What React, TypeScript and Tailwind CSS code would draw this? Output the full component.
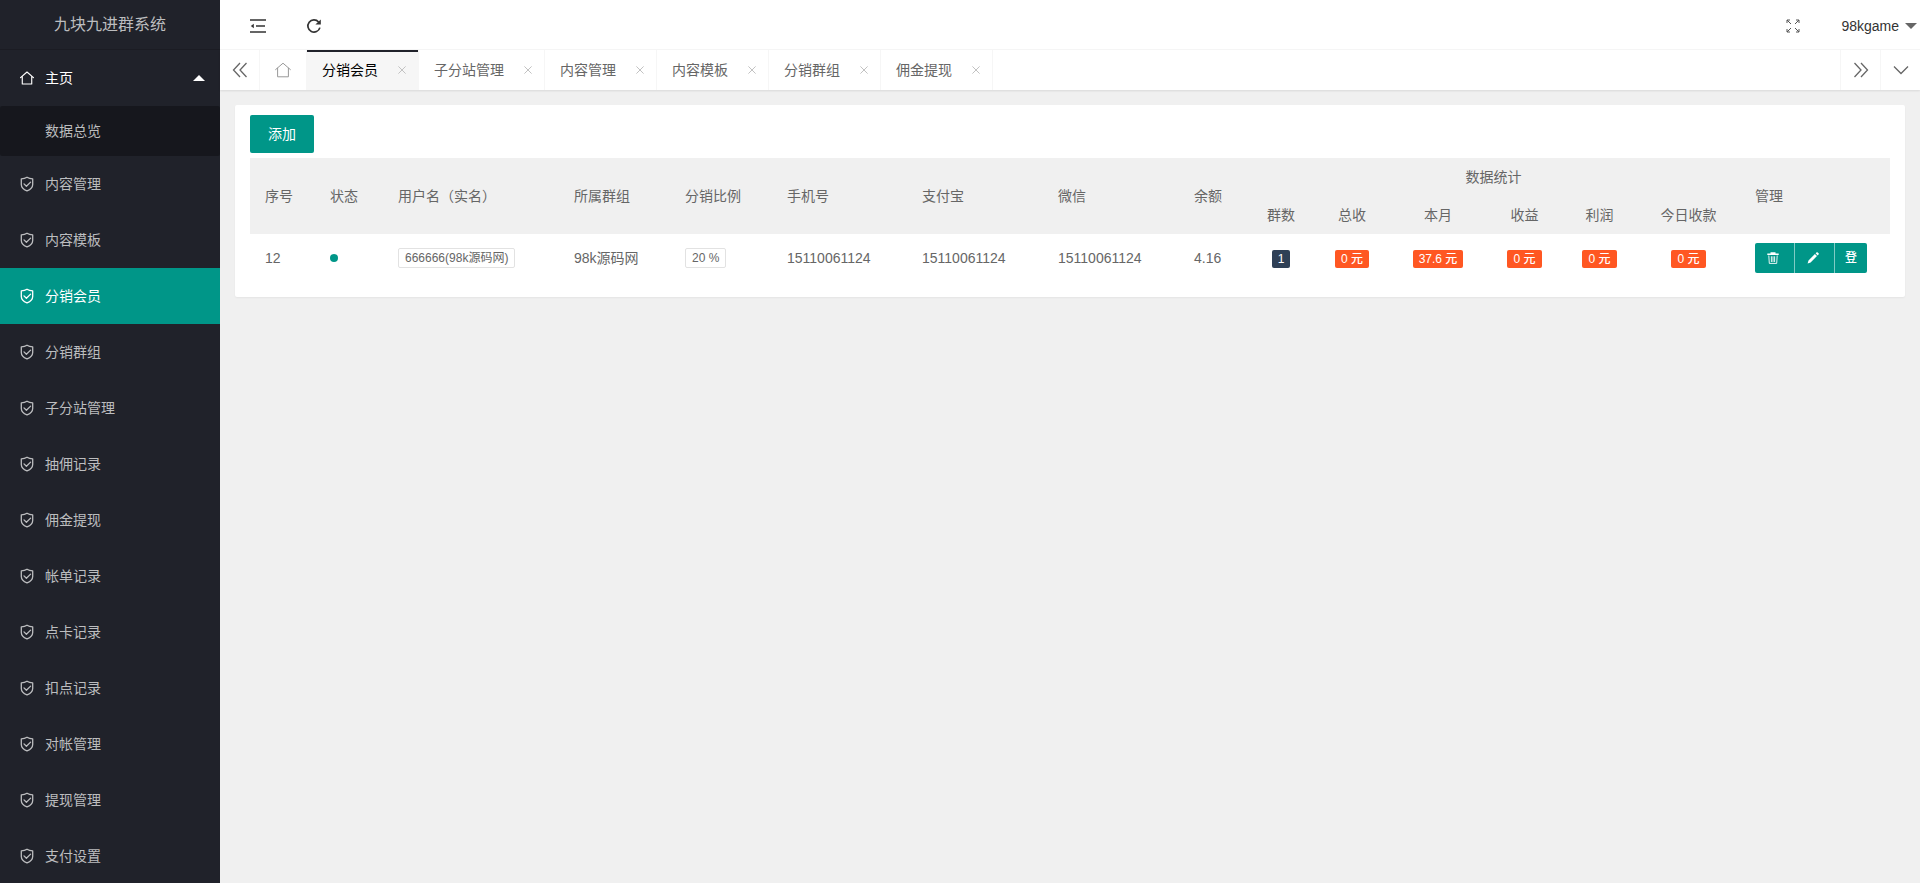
import type { ReactNode } from "react";

const MENU = [
  "内容管理", "内容模板", "分销会员", "分销群组", "子分站管理", "抽佣记录", "佣金提现",
  "帐单记录", "点卡记录", "扣点记录", "对帐管理", "提现管理", "支付设置",
];
const ACTIVE = "分销会员";

const TABS = ["分销会员", "子分站管理", "内容管理", "内容模板", "分销群组", "佣金提现"];

const COLS = [65, 68, 176, 111, 102, 135, 136, 136, 68, 68, 74, 98, 75, 75, 103, 150];
const TOTAL = COLS.reduce((a, b) => a + b, 0);

const HEADS = ["序号", "状态", "用户名（实名）", "所属群组", "分销比例", "手机号", "支付宝", "微信", "余额"];
const STATS = ["群数", "总收", "本月", "收益", "利润", "今日收款"];

const ROWS = [
  {
    id: 12,
    user: "666666(98k源码网)",
    group: "98k源码网",
    rate: "20 %",
    phone: "15110061124",
    alipay: "15110061124",
    wechat: "15110061124",
    balance: "4.16",
    groups: 1,
    money: ["0 元", "37.6 元", "0 元", "0 元", "0 元"],
  },
];

function HomeIcon({ className }: { className: string }) {
  return (
    <svg viewBox="0 0 16 16" className={className} fill="none" stroke="currentColor" strokeLinejoin="round" strokeLinecap="round">
      <path d="M0.6 7.6 8 1.2l7.4 6.4M2.6 6.2v8.6h10.8V6.2" />
    </svg>
  );
}

function ShieldIcon() {
  return (
    <svg viewBox="0 0 14 16" className="h-4 w-3.5 shrink-0" fill="none" stroke="currentColor" strokeWidth="1.3" strokeLinejoin="round" strokeLinecap="round">
      <path d="M7 1.2c1.6 1 3.6 1.5 5.700 1.600v5.600c0 3-2.300 5-5.700 6.500-3.400-1.500-5.700-3.500-5.700-6.500V2.800C3.400 2.700 5.400 2.200 7 1.200z" />
      <path d="M4 7.900l2.400 2.400 4.200-4.200" />
    </svg>
  );
}

function Sidebar() {
  return (
    <aside className="w-[220px] shrink-0 overflow-hidden bg-[#20222a] text-[#bcbdbf]">
      <div className="flex h-[50px] items-center justify-center border-b border-black/15 text-base">九块九进群系统</div>
      <nav>
        <a href="#" className="flex h-14 items-center px-5 text-white">
          <HomeIcon className="h-3.5 w-3.5 stroke-[1.3]" />
          <span className="ml-[11px] flex-1">主页</span>
          <svg viewBox="0 0 12 6" className="mr-[-5px] h-1.5 w-3" fill="currentColor">
            <path d="M6 0l6 6H0z" />
          </svg>
        </a>
        <a href="#" className="flex h-[50px] items-center rounded-xs bg-black/30 pl-[45px]">数据总览</a>
        {MENU.map((item) => (
          <a
            key={item}
            href="#"
            className={`flex h-14 items-center gap-[11px] px-5 ${item === ACTIVE ? "bg-[#009688] text-white" : ""}`}
          >
            <ShieldIcon />
            {item}
          </a>
        ))}
      </nav>
    </aside>
  );
}

function Header() {
  return (
    <header className="flex h-[50px] items-center border-b border-[#f6f6f6] bg-white pt-0.5 text-[#333]">
      <button type="button" aria-label="侧边伸缩" className="ml-[29px]">
        <svg viewBox="0 0 18 16" className="h-4 w-[18px]" fill="none" stroke="currentColor" strokeWidth="1.500">
          <path d="M1 2h16M7 8h9M1 14h16" />
          <path d="M1.800 8l3-2.200v4.400z" fill="currentColor" stroke="none" />
        </svg>
      </button>
      <button type="button" aria-label="刷新" className="ml-[39px]">
        <svg viewBox="0 0 16 16" className="h-4 w-4" fill="none" stroke="currentColor" strokeWidth="1.700">
          <path d="M12.600 4A6.100 6.100 0 1 0 13.900 9.600" />
          <path d="M14.800 1.400v5.200H9.400z" fill="currentColor" stroke="none" />
        </svg>
      </button>
      <button type="button" aria-label="全屏" className="ml-auto">
        <svg viewBox="0 0 14 14" className="h-3.5 w-3.5" fill="none" stroke="#555" strokeWidth="1">
          <path d="M1 4V1h3M1 1l4 4M10 1h3v3M13 1L9 5M1 10v3h3M1 13l4-4M13 10v3h-3M13 13L9 9" />
        </svg>
      </button>
      <button type="button" className="mr-[3px] ml-[41px] flex items-center gap-1.5">
        98kgame
        <svg viewBox="0 0 12 6" className="h-1.5 w-3" fill="#666">
          <path d="M0 0h12L6 6z" />
        </svg>
      </button>
    </header>
  );
}

function TabBar() {
  return (
    <div className="relative flex h-10 bg-white text-[#666] shadow-[0_1px_2px_rgba(0,0,0,0.1)]">
      <button type="button" aria-label="左移" className="flex w-10 items-center justify-center border-r border-[#f6f6f6]">
        <svg viewBox="0 0 16 16" className="h-4 w-4" fill="none" stroke="currentColor" strokeWidth="1.300">
          <path d="M8 1L1.500 8 8 15M14.500 1L8 8l6.500 7" />
        </svg>
      </button>
      <a href="#" aria-label="主页" className="flex w-[47px] items-center justify-center border-r border-[#f6f6f6] text-[#999]">
        <HomeIcon className="h-4 w-4" />
      </a>
      {TABS.map((tab) => (
        <div
          key={tab}
          className={`relative flex items-center border-r border-[#f6f6f6] pl-[15px] ${tab === ACTIVE ? "bg-[#f6f6f6] text-black" : ""}`}
        >
          {tab === ACTIVE && <span className="absolute inset-x-0 top-0 h-0.5 bg-[#20222a]" />}
          <a href="#">{tab}</a>
          <button type="button" aria-label={`关闭 ${tab}`} className="mr-2 ml-4 flex h-4 w-4 items-center justify-center text-[#c2c2c2]">
            <svg viewBox="0 0 8 8" className="h-2 w-2" fill="none" stroke="currentColor">
              <path d="M0.400 0.400l7.200 7.200M7.600 0.400L0.400 7.600" />
            </svg>
          </button>
        </div>
      ))}
      <button type="button" aria-label="右移" className="ml-auto flex w-10 items-center justify-center border-l border-[#f6f6f6]">
        <svg viewBox="0 0 16 16" className="h-4 w-4" fill="none" stroke="currentColor" strokeWidth="1.300">
          <path d="M1.500 1L8 8l-6.500 7M8 1l6.500 7L8 15" />
        </svg>
      </button>
      <button type="button" aria-label="更多" className="flex w-10 items-center justify-center border-l border-[#f6f6f6]">
        <svg viewBox="0 0 16 10" className="h-2.5 w-4" fill="none" stroke="currentColor" strokeWidth="1.300">
          <path d="M1 1.500l7 7 7-7" />
        </svg>
      </button>
    </div>
  );
}

function Badge({ children, dark }: { children: ReactNode; dark?: boolean }) {
  return (
    <span className={`inline-block h-[18px] rounded-xs px-1.5 align-middle text-xs leading-[18px] font-medium text-white ${dark ? "bg-[#2f4056]" : "bg-[#ff5722]"}`}>
      {children}
    </span>
  );
}

function RimBadge({ children }: { children: ReactNode }) {
  return (
    <span className="block h-5 w-fit rounded-xs border border-[#e2e2e2] px-1.5 text-xs leading-[18px]">{children}</span>
  );
}

function Actions() {
  return (
    <div className="flex h-[30px] text-xs text-white">
      <button type="button" aria-label="删除" className="flex w-[39px] items-center justify-center rounded-l-xs bg-[#009688] pr-[3px]">
        <svg viewBox="0 0 12 12" className="h-3 w-3" fill="none" stroke="currentColor">
          <path d="M0.300 2.200h11.400M3.500 1h5" strokeWidth="1.500" />
          <path d="M1.800 3.500l0.500 7.900h7.400l0.500-7.900M4.400 4.300v5.700M6 4.300v5.700M7.600 4.300v5.700" strokeWidth="0.900" />
        </svg>
      </button>
      <button type="button" aria-label="编辑" className="flex w-10 items-center justify-center border-l border-white/50 bg-[#009688] pr-[3px]">
        <svg viewBox="0 0 12 12" className="h-3 w-3" fill="currentColor">
          <path d="M0.600 11.400l0.900-3L7.900 2l2.100 2.100-6.400 6.400zM8.600 1.300l0.800-0.800a1 1 0 0 1 1.400 0l0.700 0.700a1 1 0 0 1 0 1.400l-0.800 0.800z" />
        </svg>
      </button>
      <button type="button" className="w-[33px] rounded-r-xs border-l border-white/50 bg-[#009688] font-medium">登</button>
    </div>
  );
}

function MemberTable() {
  return (
    <table className="mt-[5px] w-full table-fixed border-collapse text-left leading-5">
      <colgroup>
        {COLS.map((w, i) => (
          <col key={i} style={{ width: `${(w / TOTAL) * 100}%` }} />
        ))}
      </colgroup>
      <thead className="bg-[#f0f0f0]">
        <tr>
          {HEADS.map((h) => (
            <th key={h} rowSpan={2} className="px-[15px] py-[9px] font-normal whitespace-nowrap">{h}</th>
          ))}
          <th colSpan={6} className="px-[15px] py-[9px] text-center font-normal">数据统计</th>
          <th rowSpan={2} className="px-[15px] py-[9px] font-normal">管理</th>
        </tr>
        <tr>
          {STATS.map((s) => (
            <th key={s} className="px-[15px] py-[9px] text-center font-normal whitespace-nowrap">{s}</th>
          ))}
        </tr>
      </thead>
      <tbody className="whitespace-nowrap">
        {ROWS.map((row) => (
          <tr key={row.id} className="h-12">
            <td className="px-[15px]">{row.id}</td>
            <td className="px-[15px]">
              <span className="block h-2 w-2 rounded-full bg-[#009688]" />
            </td>
            <td className="px-[15px]"><RimBadge>{row.user}</RimBadge></td>
            <td className="px-[15px]">{row.group}</td>
            <td className="px-[15px]"><RimBadge>{row.rate}</RimBadge></td>
            <td className="px-[15px]">{row.phone}</td>
            <td className="px-[15px]">{row.alipay}</td>
            <td className="px-[15px]">{row.wechat}</td>
            <td className="px-[15px]">{row.balance}</td>
            <td className="text-center"><Badge dark>{row.groups}</Badge></td>
            {row.money.map((m, i) => (
              <td key={i} className="text-center"><Badge>{m}</Badge></td>
            ))}
            <td className="px-[15px]"><Actions /></td>
          </tr>
        ))}
      </tbody>
    </table>
  );
}

export default function App() {
  return (
    <div className="flex h-screen overflow-hidden bg-[#f0f0f0] font-['Liberation_Sans','Noto_Sans_CJK_SC',sans-serif] text-sm text-[#666]">
      <Sidebar />
      <div className="min-w-0 flex-1">
        <Header />
        <TabBar />
        <main className="p-[15px]">
          <div className="rounded-xs bg-white px-[15px] pt-2.5 pb-[15px] shadow-[0_1px_2px_rgba(0,0,0,0.05)]">
            <button type="button" className="block h-[38px] rounded-xs bg-[#009688] px-[18px] text-white">添加</button>
            <MemberTable />
          </div>
        </main>
      </div>
    </div>
  );
}
